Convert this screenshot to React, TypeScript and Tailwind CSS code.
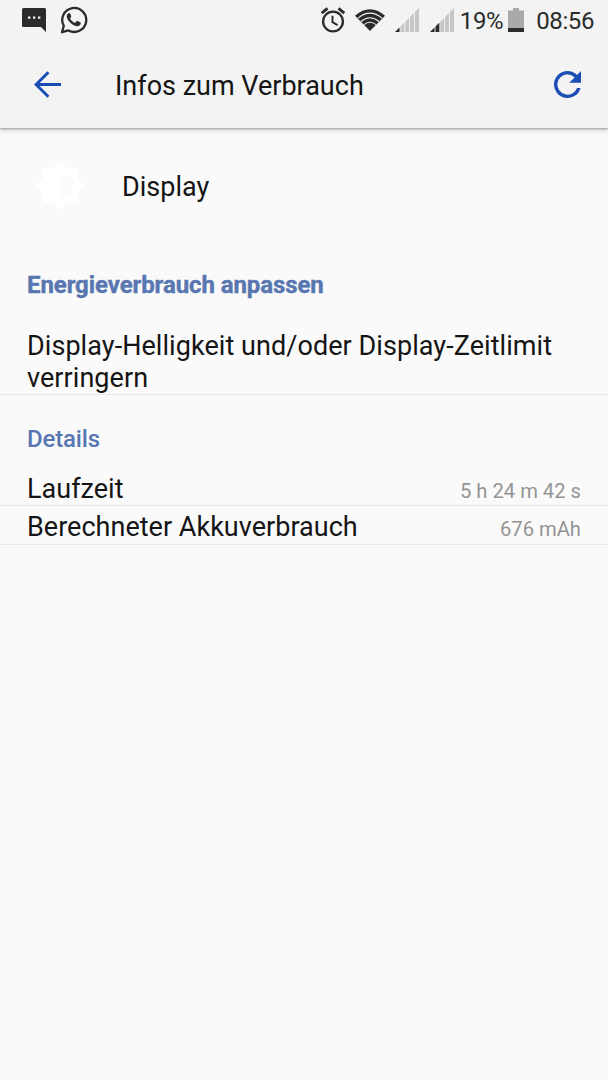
const DETAILS = [
  { label: "Laufzeit", value: "5 h 24 m 42 s", row: "h-[38px]" },
  { label: "Berechneter Akkuverbrauch", value: "676 mAh", row: "h-[39px] pb-px" },
];

export default function App() {
  return (
    <div className="flex h-[1080px] w-[608px] flex-col overflow-hidden bg-[#fafafa] font-['Roboto',sans-serif] text-[#151515]">
      <header className="relative h-32 shrink-0 bg-[#f3f3f3] shadow-[0_1px_2px_rgba(0,0,0,0.3),0_3px_5px_rgba(0,0,0,0.12)]">
        <StatusBar />
        <div className="flex h-[86px] items-center pl-[34px] pr-[27px]">
          <svg className="mb-px h-[27px] w-[27px] shrink-0" viewBox="0 0 27 27" fill="none" stroke="#1c4db5" strokeWidth="3">
            <path d="M27 13.5H3M14.4 1.2 2.1 13.5 14.4 25.8" />
          </svg>
          <h1 className="ml-[54px] pt-px text-[27px] leading-8">Infos zum Verbrauch</h1>
          <svg className="mb-px ml-auto h-[27px] w-[27px] shrink-0" viewBox="4 4 16 16" fill="#1c4db5">
            <path d="M17.65 6.35A7.96 7.96 0 0 0 12 4a8 8 0 1 0 7.73 10h-2.08A6 6 0 1 1 12 6c1.66 0 3.14.69 4.22 1.78L13 11h7V4z" />
          </svg>
        </div>
      </header>

      <main>
        <div className="flex h-[117px] items-center pl-9">
          <svg className="mb-[3px] h-[49px] w-[49px]" viewBox="0.7 0.7 22.6 22.6" fill="#fff">
            <path d="M20 15.31 23.31 12 20 8.69V4h-4.69L12 .69 8.69 4H4v4.69L.69 12 4 15.31V20h4.69L12 23.31 15.31 20H20z" />
            <path d="M12 18V6a6 6 0 0 1 0 12z" fill="#fcfcfc" />
          </svg>
          <span className="ml-[37px] pt-px text-[27px] leading-8">Display</span>
        </div>

        <section className="mt-6 border-b border-[#e9e9e9]">
          <h2 className="pl-[27px] text-[24px] leading-8 font-bold tracking-[-0.09px] text-[#5876b0] [-webkit-text-stroke:0.4px_#5876b0]">
            Energieverbrauch anpassen
          </h2>
          <p className="mt-[29px] px-[27px] text-[27px] leading-8 tracking-[0.06px]">
            Display-Helligkeit und/oder Display-Zeitlimit verringern
          </p>
        </section>

        <section className="pt-7">
          <h2 className="pl-[27px] text-[24px] leading-8 font-medium tracking-[-0.15px] text-[#5876b0]">Details</h2>
          <div className="mt-[13px]">
            {DETAILS.map((d) => (
              <div
                key={d.label}
                className={`flex items-end justify-between border-b border-[#e9e9e9] px-[27px] ${d.row}`}
              >
                <span className="text-[27px] leading-8 tracking-[0.02px]">{d.label}</span>
                <span className="text-[20.2px] leading-7 text-[#949494]">{d.value}</span>
              </div>
            ))}
          </div>
        </section>
      </main>
    </div>
  );
}

function StatusBar() {
  return (
    <div className="flex h-[42px] items-center pl-[22px] pr-[14px] text-[#2b2b2b]">
      <svg className="mb-0.5 h-6 w-6" viewBox="0 0 24 24" fill="currentColor">
        <path d="M1.5 0h21A1.5 1.5 0 0 1 24 1.5V24l-5-5H1.5A1.5 1.5 0 0 1 0 17.500V1.500A1.500 1.500 0 0 1 1.500 0z" />
        <path d="M6 8.500h2.300v2.300H6zM11 8.500h2.300v2.300H11zM16 8.500h2.300v2.300H16z" fill="#f3f3f3" />
      </svg>
      <svg className="mb-0.5 ml-[14px] h-[28px] w-[28px]" viewBox="0 0 28 28" fill="none">
        <path
          d="M2 26.2 3.8 19.8A12 12 0 1 1 8.4 24.4z"
          stroke="currentColor"
          strokeWidth="2.3"
          strokeLinejoin="round"
        />
        <path
          d="M10.1 7.6c-.4-.8-1.5-.7-2.1 0-2.4 2.5-.9 5.3 1.2 7.9 2.2 2.7 5 4.6 8 4.7 1.9 0 3.7-1.4 3.6-3.2 0-.4-.3-.6-.7-.8l-2.500-1.300c-.5-.2-.8-.1-1.100.3l-1 1.300c-.3.3-.6.4-1 .2-1.900-.9-3.300-2.100-4.300-3.900-.2-.4-.1-.6.1-.9l.8-1c.2-.3.2-.6.1-.9z"
          fill="currentColor"
        />
      </svg>

      <svg className="mb-0.5 ml-auto h-[26px] w-[26px]" viewBox="0 0 26 26" fill="none" stroke="currentColor">
        <circle cx="13" cy="14.5" r="9.9" strokeWidth="2.3" />
        <path d="M1.700 6.200 7.500 1.400M24.300 6.200 18.500 1.400" strokeWidth="2.8" />
        <path d="M12.500 8.700v6.400l5 3" strokeWidth="1.9" />
      </svg>
      <svg className="mb-0.5 ml-[9px] h-[22px] w-[30px]" viewBox="0 0 30 22">
        <path d="M0 6.700Q15-6.200 30 6.700L15 22z" fill="currentColor" />
        <path
          d="M2.800 9.300Q15-1 27.200 9.300M5.900 12.500Q15 4.900 24.100 12.500M9 15.700Q15 10.700 21 15.700"
          fill="none"
          stroke="#f3f3f3"
          strokeWidth="1.1"
        />
      </svg>
      <Signal className="mb-0.5 ml-[10px]" level="M0 24 4.5 19.5V24z" />
      <Signal className="mb-0.5 ml-[11px]" level="M0 24 4.5 19.5V24zM5.5 18.5 9.3 14.7V24H5.5z" />

      <span className="mb-px ml-[6px] text-[24px] leading-7 tracking-[-0.4px]">19%</span>
      <svg className="mb-0.5 ml-[5px] h-6 w-4" viewBox="0 0 16 24">
        <path d="M5 0h6v2.5h5V24H0V2.5h5z" fill="#a9a9a9" />
        <path d="M0 20h16v4H0z" fill="currentColor" />
      </svg>
      <span className="mb-px ml-[12px] text-[24px] leading-7 tracking-[-0.4px]">08:56</span>
    </div>
  );
}

function Signal({ level, className }: { level: string; className: string }) {
  return (
    <svg className={`h-6 w-6 ${className}`} viewBox="0 0 24 24">
      <path
        d="M0 24 4.5 19.5V24zM5.5 18.5 9.3 14.7V24H5.5zM10.3 13.7 14.1 9.9V24h-3.8zM15.1 8.9l3.8-3.8V24h-3.8zM19.9 4.1 24 0v24h-4.1z"
        fill="#c6c6c6"
      />
      <path d={level} fill="currentColor" />
    </svg>
  );
}
